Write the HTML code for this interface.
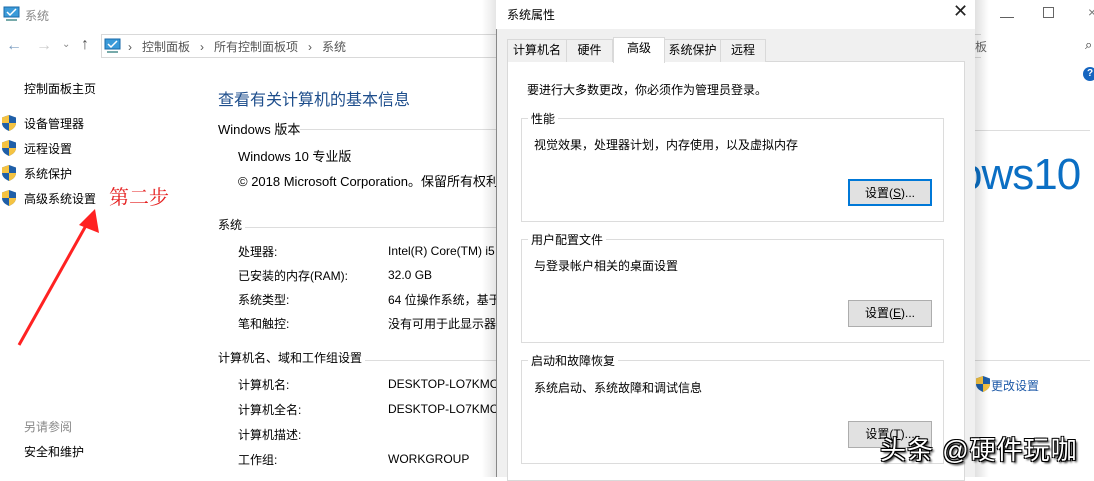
<!DOCTYPE html>
<html><head><meta charset="utf-8"><style>
*{margin:0;padding:0;box-sizing:border-box}
body{width:1094px;height:477px;overflow:hidden;background:#fff;position:relative;font-family:"Liberation Sans","Noto Sans CJK SC","Microsoft YaHei",sans-serif;font-size:12px;color:#000}
.a{position:absolute;white-space:nowrap}
.sh{position:absolute;width:14px;height:16px}
.btn{position:absolute;width:84px;height:27px;background:#e1e1e1;border:1px solid #adadad;text-align:center;line-height:25px;font-size:12px}
.grp{position:absolute;left:521px;width:423px;height:104px;border:1px solid #dcdcdc}
.gl{position:absolute;top:-9px;left:6px;background:#fff;padding:0 3px;font-size:12px}
.tab{position:absolute;top:39px;height:23px;border:1px solid #d9d9d9;border-bottom:none;background:#f0f0f0;line-height:21px;text-align:center;font-size:12px}
</style></head><body>
<svg class="a" style="left:3px;top:6px" width="18" height="16"><rect x="1" y="1" width="15" height="10" fill="#3a9ad9" stroke="#1a6aa8"/><path d="M4 6l3 3 6-6" stroke="#fff" stroke-width="1.5" fill="none"/><rect x="3" y="13" width="11" height="2" fill="#7aa"/></svg>
<div class="a" style="left:25px;top:7px;color:#888;font-size:12px">系统</div>
<div class="a" style="left:6px;top:37px;color:#7a9cc0;font-size:16px">←</div>
<div class="a" style="left:36px;top:37px;color:#ccc;font-size:16px">→</div>
<div class="a" style="left:62px;top:39px;color:#888;font-size:10px">⌄</div>
<div class="a" style="left:81px;top:36px;color:#555;font-size:16px">↑</div>
<div class="a" style="left:101px;top:34px;width:880px;height:24px;border:1px solid #d9d9d9;border-right:none"></div>
<svg class="a" style="left:104px;top:38px" width="18" height="16"><rect x="1" y="1" width="15" height="10" fill="#3a9ad9" stroke="#1a6aa8"/><path d="M4 6l3 3 6-6" stroke="#fff" stroke-width="1.5" fill="none"/><rect x="3" y="13" width="11" height="2" fill="#7aa"/></svg>
<div class="a" style="left:128px;top:38px;color:#555">›&nbsp;&nbsp;&nbsp;控制面板&nbsp;&nbsp;&nbsp;›&nbsp;&nbsp;&nbsp;所有控制面板项&nbsp;&nbsp;&nbsp;›&nbsp;&nbsp;&nbsp;系统</div>
<div class="a" style="left:24px;top:80px">控制面板主页</div>
<svg width="0" height="0"><defs><g id="sh"><path d="M7 0L14 2.5V8C14 12 10.5 14.5 7 16 3.5 14.5 0 12 0 8V2.5Z" fill="#1f5fa8"/><path d="M7 0V8H0V2.5Z" fill="#f5c342"/><path d="M7 8H14C14 12 10.5 14.5 7 16Z" fill="#f5c342"/></g></defs></svg>
<svg class="sh" style="left:2px;top:115px"><use href="#sh"/></svg>
<svg class="sh" style="left:2px;top:140px"><use href="#sh"/></svg>
<svg class="sh" style="left:2px;top:165px"><use href="#sh"/></svg>
<svg class="sh" style="left:2px;top:190px"><use href="#sh"/></svg>
<div class="a" style="left:24px;top:115px">设备管理器</div>
<div class="a" style="left:24px;top:140px">远程设置</div>
<div class="a" style="left:24px;top:165px">系统保护</div>
<div class="a" style="left:24px;top:190px">高级系统设置</div>
<div class="a" style="left:109px;top:181px;color:#e52020;font-size:20px;font-family:'Noto Serif CJK SC',serif">第二步</div>
<svg class="a" style="left:15px;top:205px" width="85" height="145"><path d="M78 8L4 140" stroke="#f22" stroke-width="3"/><path d="M80 4L64 20L84 28Z" fill="#f22"/></svg>
<div class="a" style="left:24px;top:418px;color:#888">另请参阅</div>
<div class="a" style="left:24px;top:443px">安全和维护</div>
<div class="a" style="left:218px;top:86px;color:#1e4e8c;font-size:16px">查看有关计算机的基本信息</div>
<div class="a" style="left:218px;top:119px;font-size:13px">Windows 版本</div>
<div class="a" style="left:300px;top:129px;width:200px;border-top:1px solid #ddd"></div>
<div class="a" style="left:238px;top:146px;font-size:13px">Windows 10 专业版</div>
<div class="a" style="left:238px;top:171px;font-size:13px">© 2018 Microsoft Corporation。保留所有权利</div>
<div class="a" style="left:218px;top:216px">系统</div>
<div class="a" style="left:245px;top:227px;width:255px;border-top:1px solid #ddd"></div>
<div class="a" style="left:238px;top:243px">处理器:</div><div class="a" style="left:388px;top:244px">Intel(R) Core(TM) i5</div>
<div class="a" style="left:238px;top:267px">已安装的内存(RAM):</div><div class="a" style="left:388px;top:268px">32.0 GB</div>
<div class="a" style="left:238px;top:291px">系统类型:</div><div class="a" style="left:388px;top:291px">64 位操作系统，基于</div>
<div class="a" style="left:238px;top:315px">笔和触控:</div><div class="a" style="left:388px;top:315px">没有可用于此显示器</div>
<div class="a" style="left:218px;top:349px">计算机名、域和工作组设置</div>
<div class="a" style="left:365px;top:360px;width:135px;border-top:1px solid #ddd"></div>
<div class="a" style="left:238px;top:376px">计算机名:</div><div class="a" style="left:388px;top:377px">DESKTOP-LO7KMC</div>
<div class="a" style="left:238px;top:401px">计算机全名:</div><div class="a" style="left:388px;top:402px">DESKTOP-LO7KMC</div>
<div class="a" style="left:238px;top:426px">计算机描述:</div>
<div class="a" style="left:238px;top:451px">工作组:</div><div class="a" style="left:388px;top:452px">WORKGROUP</div>
<div class="a" style="left:1000px;top:8px;color:#555;font-size:14px">—</div>
<div class="a" style="left:1043px;top:7px;width:11px;height:11px;border:1px solid #666"></div>
<div class="a" style="left:1088px;top:4px;color:#777;font-size:14px">×</div>
<div class="a" style="left:975px;top:38px;color:#666">板</div>
<div class="a" style="left:1085px;top:37px;color:#333;font-size:13px">⌕</div>
<div class="a" style="left:1083px;top:67px;width:14px;height:14px;border-radius:50%;background:#1565c0;color:#fff;font-size:10px;font-weight:bold;line-height:14px;text-align:center">?</div>
<div class="a" style="left:975px;top:130px;width:115px;border-top:1px solid #ddd"></div>
<div class="a" style="left:958px;top:150px;color:#0b6fc4;font-size:44px;letter-spacing:-1px">ows10</div>
<div class="a" style="left:975px;top:360px;width:115px;border-top:1px solid #ddd"></div>
<svg class="sh" style="left:976px;top:376px"><use href="#sh"/></svg>
<div class="a" style="left:991px;top:377px;color:#1e5aa8">更改设置</div>
<div class="a" style="left:975px;top:0;width:14px;height:477px;background:linear-gradient(90deg,rgba(0,0,0,.12),rgba(0,0,0,0))"></div>
<div class="a" style="left:482px;top:0;width:14px;height:477px;background:linear-gradient(270deg,rgba(0,0,0,.10),rgba(0,0,0,0))"></div>
<div class="a" style="left:496px;top:0;width:479px;height:477px;background:#f0f0f0;border-left:1px solid #888"></div>
<div class="a" style="left:496px;top:0;width:479px;height:29px;background:#fff"></div>
<div class="a" style="left:507px;top:6px">系统属性</div>
<div class="a" style="left:953px;top:1px;font-size:18px;color:#222">✕</div>
<div class="a" style="left:507px;top:61px;width:458px;height:420px;background:#fff;border:1px solid #d9d9d9"></div>
<div class="tab" style="left:507px;width:60px">计算机名</div>
<div class="tab" style="left:566px;width:47px">硬件</div>
<div class="tab" style="left:664px;width:57px">系统保护</div>
<div class="tab" style="left:720px;width:46px">远程</div>
<div class="tab" style="left:613px;top:37px;height:26px;width:52px;background:#fff;line-height:20px">高级</div>
<div class="a" style="left:527px;top:81px">要进行大多数更改，你必须作为管理员登录。</div>
<div class="grp" style="top:118px"><span class="gl">性能</span></div>
<div class="a" style="left:534px;top:136px">视觉效果，处理器计划，内存使用，以及虚拟内存</div>
<div class="btn" style="left:848px;top:179px;border:2px solid #0078d7">设置(<u>S</u>)...</div>
<div class="grp" style="top:239px"><span class="gl">用户配置文件</span></div>
<div class="a" style="left:534px;top:257px">与登录帐户相关的桌面设置</div>
<div class="btn" style="left:848px;top:300px">设置(<u>E</u>)...</div>
<div class="grp" style="top:360px"><span class="gl">启动和故障恢复</span></div>
<div class="a" style="left:534px;top:379px">系统启动、系统故障和调试信息</div>
<div class="btn" style="left:848px;top:421px">设置(<u>T</u>)...</div>
<div class="a" style="left:880px;top:430px;color:#fff;font-size:26px;letter-spacing:1px;text-shadow:1px 1px 0 #000,-1px -1px 0 #000,1px -1px 0 #000,-1px 1px 0 #000,2px 2px 2px #000">头条 @硬件玩咖</div>
</body></html>
